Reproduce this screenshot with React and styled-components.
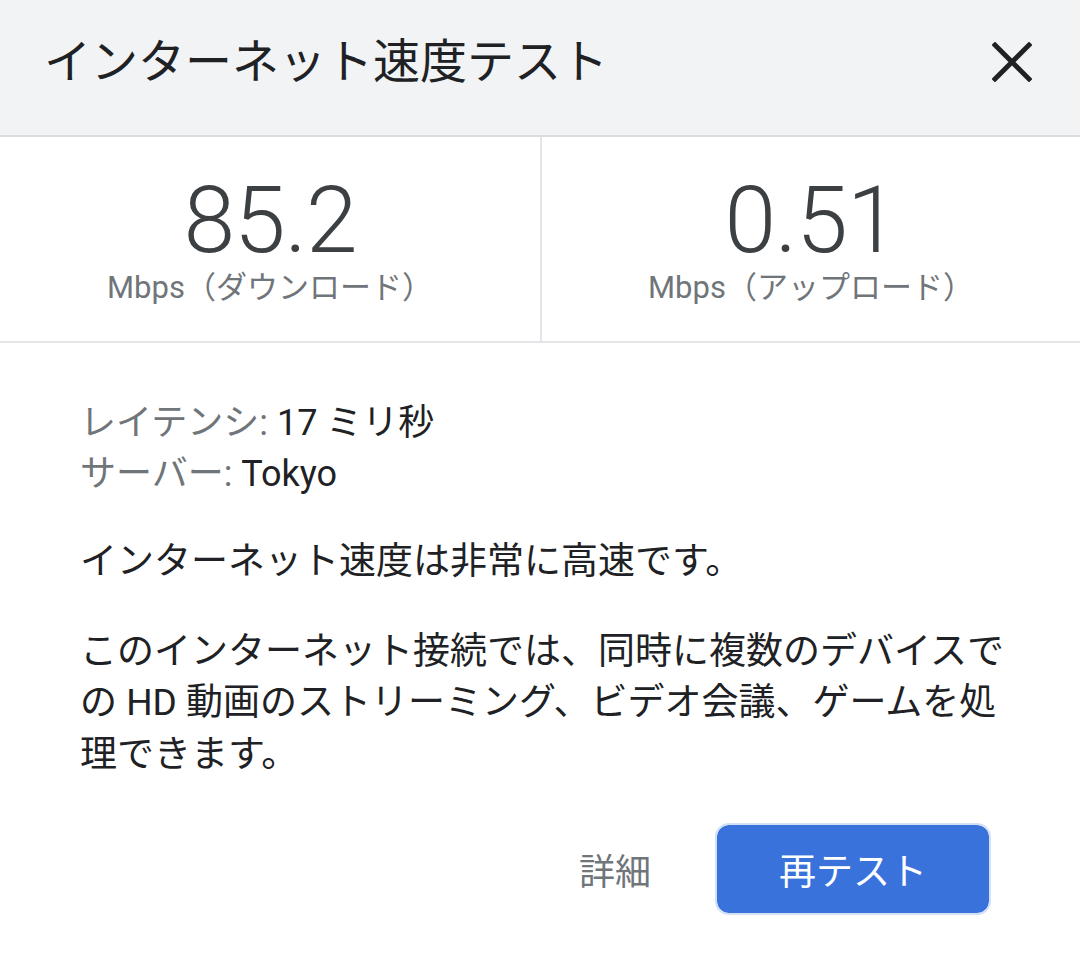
import React from 'react'
import styled, { createGlobalStyle } from 'styled-components'

const GlobalStyle = createGlobalStyle`
    html, body {
        margin: 0;
        padding: 0;
        background: #ffffff;
    }
    body {
        font-family: Roboto, 'Noto Sans CJK JP', sans-serif;
        color: #202124;
    }
`

const Dialog = styled.div`
    width: 1080px;
    height: 959px;
    background: #ffffff;
    display: flex;
    flex-direction: column;
    overflow: hidden;
`

const Header = styled.div`
    height: 137px;
    box-sizing: border-box;
    background: #f1f3f4;
    border-bottom: 2px solid #dadce0;
    display: flex;
    align-items: center;
    justify-content: space-between;
    padding: 0 44px 12px 44px;
`

const Title = styled.h1`
    margin: 0;
    font-family: Roboto, 'Noto Sans CJK JP', sans-serif;
    font-weight: 400;
    font-size: 47px;
    line-height: 56px;
    color: #202124;
`

const CloseButton = styled.button`
    width: 48px;
    height: 48px;
    padding: 0;
    border: none;
    background: transparent;
    display: flex;
    align-items: center;
    justify-content: center;
    cursor: pointer;
`

const Stats = styled.div`
    height: 206px;
    box-sizing: border-box;
    display: grid;
    grid-template-columns: 1fr 1fr;
    border-bottom: 2px solid #e3e5e8;
`

const StatCell = styled.div`
    display: flex;
    flex-direction: column;
    align-items: center;
    padding-top: 34px;
    border-left: ${p => (p.$divider ? '2px solid #e3e5e8' : 'none')};
`

const StatValue = styled.div`
    font-family: Roboto, sans-serif;
    font-weight: 300;
    font-size: 93px;
    line-height: 100px;
    color: #3c4043;
    letter-spacing: -1px;
`

const StatUnit = styled.div`
    font-family: Roboto, 'Noto Sans CJK JP', sans-serif;
    font-size: 31px;
    line-height: 36px;
    color: #70757a;
    margin-top: -1px;
`

const Body = styled.div`
    padding: 55px 80px 0 80px;
    display: flex;
    flex-direction: column;
`

const InfoList = styled.div`
    display: flex;
    flex-direction: column;
`

const InfoLine = styled.div`
    font-size: 36px;
    line-height: 51px;
    color: #202124;
`

const InfoLabel = styled.span`
    color: #70757a;
`

const Paragraph = styled.p`
    margin: ${p => p.$gap}px -24px 0 0;
    font-size: 37px;
    line-height: 51.5px;
    color: #202124;
    font-family: Roboto, 'Noto Sans CJK JP', sans-serif;
`

const Actions = styled.div`
    display: flex;
    align-items: center;
    justify-content: flex-end;
    gap: 64px;
    margin-top: 43px;
    margin-right: 9px;
`

const TextButton = styled.button`
    border: none;
    background: transparent;
    padding: 0;
    font-family: 'Noto Sans CJK JP', sans-serif;
    font-size: 36px;
    color: #70757a;
    cursor: pointer;
`

const PrimaryButton = styled.button`
    width: 276px;
    height: 92px;
    box-sizing: border-box;
    border-radius: 14px;
    border: 2px solid #d3e0f6;
    background: #3a72dc;
    background-clip: padding-box;
    color: #ffffff;
    font-family: 'Noto Sans CJK JP', sans-serif;
    font-size: 37px;
    cursor: pointer;
`

const CloseIcon = () => (
    <svg width="40" height="40" viewBox="0 0 40 40">
        <path d="M3 3 L37 37 M37 3 L3 37" stroke="#202124" strokeWidth="4.8" strokeLinecap="square" />
    </svg>
)

const App = () => {
    return (
        <Dialog>
            <GlobalStyle />
            <Header>
                <Title>インターネット速度テスト</Title>
                <CloseButton aria-label="閉じる">
                    <CloseIcon />
                </CloseButton>
            </Header>
            <Stats>
                <StatCell>
                    <StatValue>85.2</StatValue>
                    <StatUnit>Mbps（ダウンロード）</StatUnit>
                </StatCell>
                <StatCell $divider>
                    <StatValue>0.51</StatValue>
                    <StatUnit>Mbps（アップロード）</StatUnit>
                </StatCell>
            </Stats>
            <Body>
                <InfoList>
                    <InfoLine><InfoLabel>レイテンシ:</InfoLabel> 17 ミリ秒</InfoLine>
                    <InfoLine><InfoLabel>サーバー:</InfoLabel> Tokyo</InfoLine>
                </InfoList>
                <Paragraph $gap={36}>インターネット速度は非常に高速です。</Paragraph>
                <Paragraph $gap={38}>
                    このインターネット接続では、同時に複数のデバイスでの HD 動画のストリーミング、ビデオ会議、ゲームを処理できます。
                </Paragraph>
                <Actions>
                    <TextButton>詳細</TextButton>
                    <PrimaryButton>再テスト</PrimaryButton>
                </Actions>
            </Body>
        </Dialog>
    )
}

export default App
